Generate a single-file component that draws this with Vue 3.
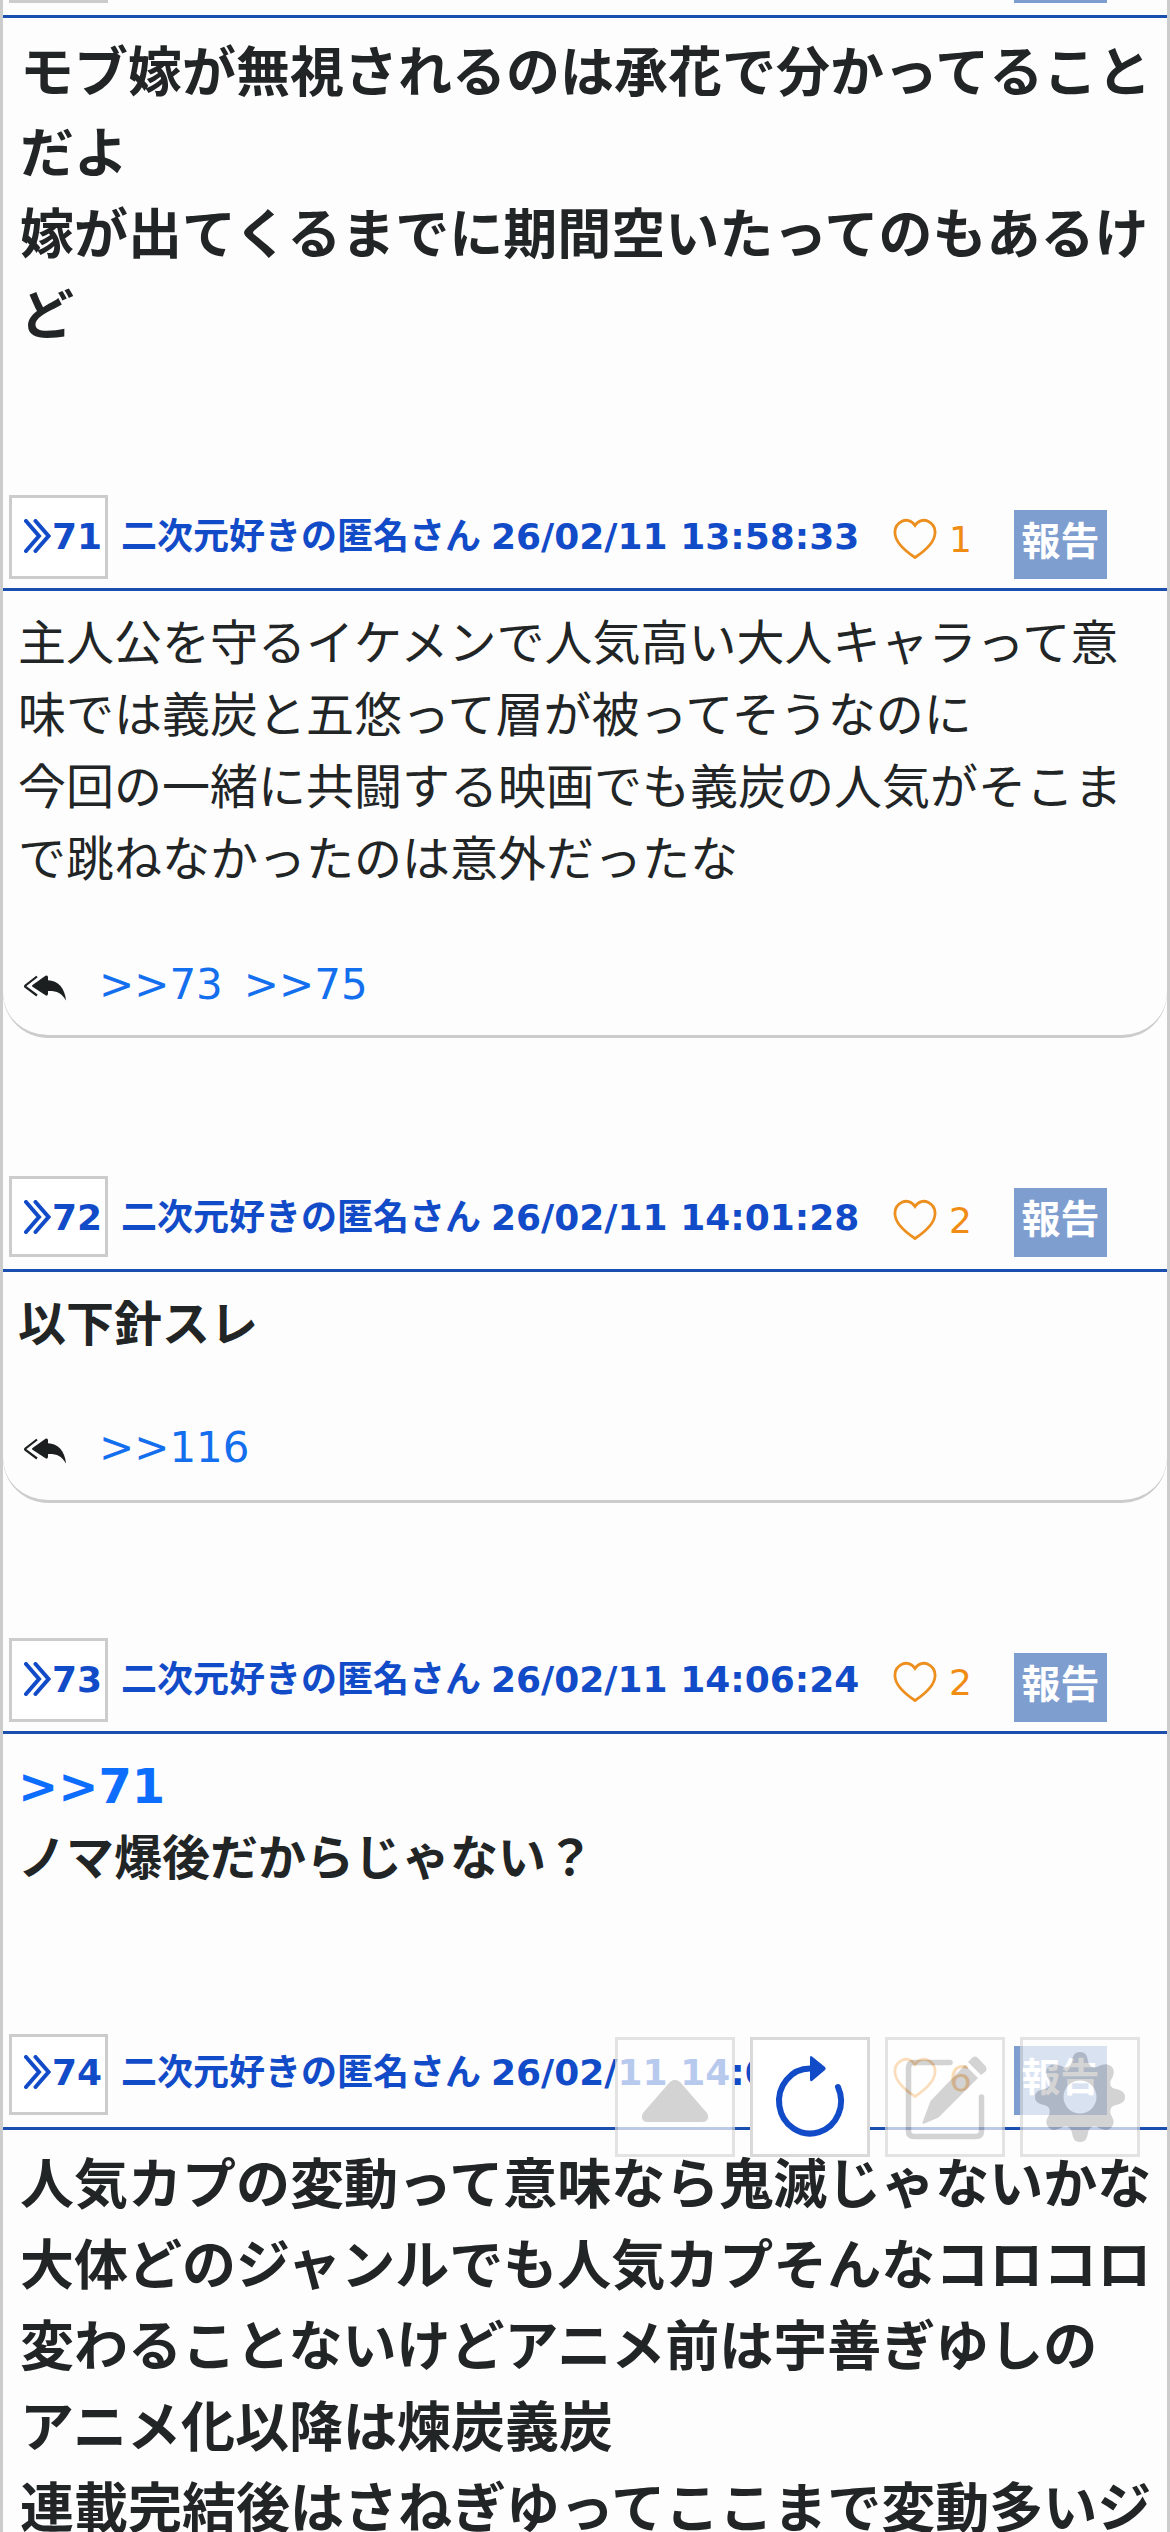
<script setup>
const posts = [
  {
    id: 71, variant: 'tall', time: '26/02/11 13:58:33', likes: 1,
    lines: ['主人公を守るイケメンで人気高い大人キャラって意', '味では義炭と五悠って層が被ってそうなのに', '今回の一緒に共闘する映画でも義炭の人気がそこま', 'で跳ねなかったのは意外だったな'],
    replies: [73, 75],
  },
  {
    id: 72, variant: 'short', time: '26/02/11 14:01:28', likes: 2,
    bold: true, lines: ['以下針スレ'], replies: [116],
  },
  {
    id: 73, variant: 'tall', time: '26/02/11 14:06:24', likes: 2,
    bold: true, quote: 71, lines: ['ノマ爆後だからじゃない？'], replies: [],
  },
  {
    id: 74, variant: 'short', time: '26/02/11 14:07:15', likes: 6,
    bold: true, large: true,
    lines: ['人気カプの変動って意味なら鬼滅じゃないかな', '大体どのジャンルでも人気カプそんなコロコロ', '変わることないけどアニメ前は宇善ぎゆしの', 'アニメ化以降は煉炭義炭', '連載完結後はさねぎゆってここまで変動多いジ'],
    replies: [],
  },
]
const firstLines = ['モブ嫁が無視されるのは承花で分かってること', 'だよ', '嫁が出てくるまでに期間空いたってのもあるけ', 'ど']
</script>

<template>
  <main class="thread">
    <article class="post post-70">
      <header class="head head-cut">
        <span class="num"></span>
        <span class="report"></span>
      </header>
      <div class="body bold large">
        <div v-for="l in firstLines" :key="l" class="line">{{ l }}</div>
      </div>
    </article>

    <article v-for="p in posts" :key="p.id" class="post" :class="`post-${p.id}`">
      <header class="head" :class="p.variant">
        <a class="num">
          <svg class="chev" viewBox="0 0 27 34" width="27" height="34"><path d="M2 2 15 17 2 32M11.5 2 24.500 17 11.500 32" /></svg><span>{{ p.id }}</span>
        </a>
        <span class="name"><span>二次元好きの匿名さん</span><span>{{ p.time }}</span></span>
        <span class="like">
          <svg class="heart" viewBox="0 0 44 42" width="44" height="42"><path d="M22 7.500C18.500 2 13 1.300 9 3.300 4.500 5.500 1.500 10 2 15.500 2.500 24 10 31.500 22 39.500 34 31.500 41.500 24 42 15.500 42.500 10 39.500 5.500 35 3.300 31 1.300 25.500 2 22 7.500Z" /></svg>
          <span>{{ p.likes }}</span>
        </span>
        <button class="report">報告</button>
      </header>
      <div class="body" :class="{ bold: p.bold, large: p.large, card: p.replies.length }">
        <div v-if="p.quote" class="line"><a class="quote">&gt;&gt;{{ p.quote }}</a></div>
        <div v-for="l in p.lines" :key="l" class="line">{{ l }}</div>
        <div v-if="p.replies.length" class="replies">
          <svg class="reply-icon" viewBox="0 0 42 26" width="42" height="26">
            <path class="thin" d="M13 1.500 1.500 10.500Q.800 11.300 1.500 12L13 20.500" />
            <path d="M8.500 10 21.500.700Q24 -.300 24 2.500V5.200C34 5.500 41 13 42 25.500 37.500 18 33 15.800 24 16V18.500Q24 21.500 21.500 20.300L8.500 11.700Q7.500 10.800 8.500 10Z" />
          </svg>
          <a v-for="r in p.replies" :key="r" class="link">&gt;&gt;{{ r }}</a>
        </div>
      </div>
    </article>

    <nav class="tools">
      <button class="tool faded">
        <svg viewBox="0 0 114 114"><path d="M51.500 42.500Q57 37 62.500 42.500L89 73Q92 78 87.500 81.500L84 82H30L26.500 81.500Q22 78 25 73Z" /></svg>
      </button>
      <button class="tool refresh">
        <svg viewBox="0 0 114 114"><path class="ring" d="M57 28.500A31 32.500 0 1 0 85 47" /><path d="M57 17.500Q57 15 59 16.500L72 27Q73.500 28.500 72 30L59 41Q57 42 57 39.500Z" /></svg>
      </button>
      <button class="tool faded">
        <svg viewBox="0 0 114 114">
          <path class="frame" d="M62 22.500H26Q20.500 22.500 20.500 28V91Q20.500 96.500 26 96.500H88Q93.500 96.500 93.500 91V57" />
          <path d="M77 25 90 38 50.500 77.500 36.500 83.500Q33.500 84.500 35 81L42.500 61Z" />
          <path d="M80 22 84.500 17.500Q87 15.500 90 18L97.500 26Q99.500 29 97.500 31.500L93 35Z" />
        </svg>
      </button>
      <button class="tool faded">
        <svg viewBox="0 0 114 114"><path fill-rule="evenodd" d="M57 12C63 12 64 16 65 21C66 27 71 29 76 26C81 24 85 23 89 27C92 31 91 35 88 40C86 45 88 48 93 49C98 50 102 52 102 57C102 62 98 64 93 65C88 66 86 70 88 75C91 80 92 83 88 88C84 91 81 90 76 88C71 85 66 87 65 93C64 98 63 102 57 102C51 102 50 98 49 93C48 87 43 85 38 88C33 90 30 91 26 88C22 83 23 80 26 75C28 70 26 66 21 65C16 64 12 62 12 57C12 52 16 50 21 49C26 48 28 45 26 40C23 35 22 31 25 27C29 23 33 24 38 26C43 29 48 27 49 21C50 16 51 12 57 12ZM57 40.500A16.500 16.500 0 1 0 57 73.500 16.500 16.500 0 1 0 57 40.500Z" /></svg>
      </button>
    </nav>
  </main>
</template>

<style>
body {
  margin: 0;
  background: #fdfdfd;
}
</style>

<style scoped>
.thread {
  position: relative;
  box-sizing: border-box;
  width: 1170px;
  height: 2532px;
  overflow: hidden;
  border: solid #ccc;
  border-width: 0 3px;
  color: #222526;
  background: #fdfdfd;
  font-family: "DejaVu Sans", "Noto Sans CJK JP", sans-serif;
}
.post {
  display: flex;
  flex-direction: column;
}
.post-70 { height: 495px; }
.post-71 { height: 681px; }
.post-72 { height: 462px; }
.post-73 { height: 396px; }
.head {
  box-sizing: border-box;
  flex: none;
  display: flex;
  align-items: flex-start;
  height: 96px;
  padding-left: 6px;
  border-bottom: 3px solid #1a4fb0;
}
.head-cut {
  height: 18px;
}
.num {
  box-sizing: border-box;
  flex: none;
  width: 99px;
  height: 84px;
  border: 3px solid #ccc;
  background: #fff;
  display: flex;
  padding: 18px 0 0 12px;
  color: #124bc8;
  font-size: 36px;
  font-weight: 700;
  line-height: 42px;
}
.head-cut .num {
  height: 3px;
  padding: 0;
  border-top: 0;
}
.short .num { height: 81px; }
.chev {
  margin: 3px 1px 0 0;
  flex: none;
}
.chev path {
  fill: none;
  stroke: #124bc8;
  stroke-width: 4;
  stroke-linecap: round;
}
.name {
  flex: none;
  display: flex;
  gap: 10px;
  width: 772px;
  margin: 21px 0 0 13px;
  color: #124bc8;
  font-size: 36px;
  font-weight: 700;
  line-height: 42px;
  white-space: nowrap;
}
.like {
  display: flex;
  width: 122px;
  margin-top: 23px;
  color: #f08c14;
  font-size: 36px;
  line-height: 42px;
  gap: 12px;
}
.like span { margin-top: 1px; }
.heart path {
  fill: none;
  stroke: #ec8f1e;
  stroke-width: 2.8;
}
.report {
  flex: none;
  width: 93px;
  height: 69px;
  margin: 15px 0 0 -1px;
  padding: 0 0 12px;
  border: 0;
  color: #fff;
  background: #7f9ed0;
  font: 700 39px/57px "Noto Sans CJK JP", sans-serif;
}
.head-cut .report {
  height: 3px;
  margin: 0 0 0 906px;
  padding: 0;
}
.short .report { margin-top: 12px; }
.post-74 .num { padding-top: 15px; }
.post-74 .name { margin-top: 18px; }
.body {
  box-sizing: border-box;
  padding: 16px 0 0 15px;
  font-size: 48px;
  line-height: 72px;
  white-space: nowrap;
}
.bold { font-weight: 700; }
.large {
  padding: 15px 0 0 17px;
  font-size: 54px;
  line-height: 81px;
}
.card {
  height: 447px;
  border-bottom: 3px solid #ccc;
  border-radius: 0 0 45px 45px;
}
.post-72 .card { height: 231px; }
.quote { color: #0d6efd; }
.replies {
  display: flex;
  gap: 21px;
  margin: 58px 0 0 6px;
  font-size: 42px;
  font-weight: 400;
  line-height: 63px;
}
.post-72 .replies { margin-top: 56px; }
.reply-icon {
  margin: 22px 12px 0 0;
  fill: #1c1f20;
}
.reply-icon .thin {
  fill: none;
  stroke: #1c1f20;
  stroke-width: 2.2;
}
.link { color: #146fee; }
.tools {
  position: absolute;
  top: 2037px;
  left: 612px;
  display: flex;
  gap: 15px;
}
.tool {
  box-sizing: border-box;
  width: 120px;
  height: 120px;
  padding: 0;
  border: 3px solid #d9d9d9;
  background: #fff;
  fill: #c2c2c2;
}
.tool svg {
  display: block;
  width: 114px;
  height: 114px;
}
.faded { opacity: .7; }
.refresh { fill: #124bc8; }
.ring {
  fill: none;
  stroke: #124bc8;
  stroke-width: 6;
  stroke-linecap: round;
}
.frame {
  fill: none;
  stroke: #c2c2c2;
  stroke-width: 5.5;
  stroke-linecap: round;
}
</style>
